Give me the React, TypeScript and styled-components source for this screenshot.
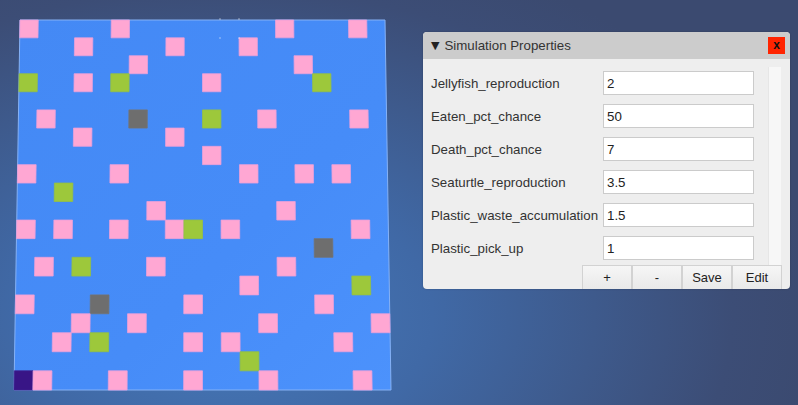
import React from "react";
import styled, { createGlobalStyle } from "styled-components";

const GlobalStyle = createGlobalStyle`
  html, body {
    margin: 0;
    padding: 0;
    width: 798px;
    height: 405px;
    overflow: hidden;
  }
  body {
    font-family: "Liberation Sans", Arial, sans-serif;
  }
`;

const Scene = styled.div`
  position: relative;
  width: 798px;
  height: 405px;
  overflow: hidden;
  background: radial-gradient(
    ellipse 75% 95% at 28% 78%,
    #4679b9 0%,
    #4069a6 35%,
    #3e5a8c 62%,
    #3c4d76 85%,
    #3b4a70 100%
  );
`;

const Canvas = styled.svg`
  display: block;
  width: 798px;
  height: 405px;
`;

const Panel = styled.div`
  position: absolute;
  left: 423px;
  top: 32px;
  width: 367px;
  height: 257px;
  background: #eeeeee;
  border-radius: 4px;
  overflow: hidden;
  display: flex;
  flex-direction: column;
  box-shadow: 0 0 2px rgba(0, 0, 0, 0.25);
`;

const Header = styled.div`
  height: 27px;
  flex: none;
  background: #cccccc;
  display: flex;
  align-items: center;
  padding: 0 5px 0 8px;
  font-size: 13.3px;
  color: #333;
`;

const Caret = styled.span`
  font-family: "DejaVu Sans", sans-serif;
  font-size: 11px;
  margin-right: 5px;
  color: #222;
`;

const Title = styled.span`
  flex: 1;
`;

const Close = styled.div`
  width: 17px;
  height: 17px;
  background: #ff2400;
  color: #111;
  font-size: 12px;
  font-weight: bold;
  display: flex;
  align-items: center;
  justify-content: center;
  line-height: 1;
  padding-bottom: 2px;
  box-sizing: border-box;
`;

const Body = styled.div`
  flex: 1;
  display: flex;
  min-height: 0;
`;

const List = styled.div`
  padding: 12px 0 0 8px;
  display: flex;
  flex-direction: column;
  gap: 9px;
`;

const Row = styled.div`
  display: grid;
  grid-template-columns: 172px 151px;
  align-items: center;
  height: 24px;
`;

const Label = styled.span`
  font-size: 13.3px;
  color: #333;
  white-space: nowrap;
`;

const Field = styled.input`
  box-sizing: border-box;
  width: 151px;
  height: 24px;
  margin: 0;
  border: 1px solid #cbcbcb;
  background: #fff;
  padding: 0 3px;
  font-family: "Liberation Sans", Arial, sans-serif;
  font-size: 13.3px;
  color: #222;
  outline: none;
`;

const Track = styled.div`
  width: 13px;
  margin: 8px 9px 0 auto;
  background: #f7f7f7;
  border-left: 1px solid #e6e6e6;
  box-sizing: border-box;
`;

const Footer = styled.div`
  flex: none;
  height: 24px;
  display: flex;
  justify-content: flex-end;
  padding-right: 8px;
`;

const Button = styled.button`
  box-sizing: border-box;
  width: 50px;
  height: 24px;
  margin: 0;
  padding: 0;
  border: 1px solid #d2d2d2;
  border-bottom: none;
  background: linear-gradient(#f6f6f6, #e9e9e9);
  font-family: "Liberation Sans", Arial, sans-serif;
  font-size: 13px;
  color: #222;
`;

type Kind = "p" | "g" | "k" | "d";

const cells: [number, number, Kind][] = [
  [0, 0, "p"], [0, 5, "p"], [0, 14, "p"], [0, 18, "p"],
  [1, 3, "p"], [1, 8, "p"], [1, 12, "p"],
  [2, 6, "p"], [2, 15, "p"],
  [3, 0, "g"], [3, 3, "p"], [3, 5, "g"], [3, 10, "p"], [3, 16, "g"],
  [5, 1, "p"], [5, 6, "k"], [5, 10, "g"], [5, 13, "p"], [5, 18, "p"],
  [6, 3, "p"], [6, 8, "p"],
  [7, 10, "p"],
  [8, 0, "p"], [8, 5, "p"], [8, 12, "p"], [8, 15, "p"], [8, 17, "p"],
  [9, 2, "g"],
  [10, 7, "p"], [10, 14, "p"],
  [11, 0, "p"], [11, 2, "p"], [11, 5, "p"], [11, 8, "p"], [11, 9, "g"], [11, 11, "p"], [11, 18, "p"],
  [12, 16, "k"],
  [13, 1, "p"], [13, 3, "g"], [13, 7, "p"], [13, 14, "p"],
  [14, 12, "p"], [14, 18, "g"],
  [15, 0, "p"], [15, 4, "k"], [15, 9, "p"], [15, 16, "p"],
  [16, 3, "p"], [16, 6, "p"], [16, 13, "p"], [16, 19, "p"],
  [17, 2, "p"], [17, 4, "g"], [17, 9, "p"], [17, 11, "p"], [17, 17, "p"],
  [18, 12, "g"],
  [19, 0, "d"], [19, 1, "p"], [19, 5, "p"], [19, 9, "p"], [19, 13, "p"], [19, 18, "p"],
];

const fills: Record<Kind, string> = {
  p: "#ffa7d3",
  g: "#9dc83b",
  k: "#6e6e6e",
  d: "#381586",
};
const strokes: Record<Kind, string> = {
  p: "#e9a0da",
  g: "#93c046",
  k: "#747474",
  d: "#40208e",
};

const rowY = (r: number) => 20 + r * 17.8 + r * r * 0.035;
const colX = (c: number, y: number) => {
  const t = (y - 20) / 370;
  const left = 20 - 6 * t;
  const right = 385 + 6 * t;
  return left + ((right - left) * c) / 20;
};

const quad = (r: number, c: number) => {
  const y0 = rowY(r);
  const y1 = rowY(r + 1);
  const pts = [
    [colX(c, y0), y0],
    [colX(c + 1, y0), y0],
    [colX(c + 1, y1), y1],
    [colX(c, y1), y1],
  ];
  return pts.map((p) => `${p[0].toFixed(2)},${p[1].toFixed(2)}`).join(" ");
};

const props: [string, string][] = [
  ["Jellyfish_reproduction", "2"],
  ["Eaten_pct_chance", "50"],
  ["Death_pct_chance", "7"],
  ["Seaturtle_reproduction", "3.5"],
  ["Plastic_waste_accumulation", "1.5"],
  ["Plastic_pick_up", "1"],
];

export default function App() {
  return (
    <>
      <GlobalStyle />
      <Scene>
        <Canvas viewBox="0 0 798 405">
          <defs>
            <linearGradient id="plane" x1="0" y1="0" x2="1" y2="1">
              <stop offset="0" stopColor="#4489f5" />
              <stop offset="0.6" stopColor="#468cf8" />
              <stop offset="1" stopColor="#4c92fc" />
            </linearGradient>
          </defs>
          <polygon
            points="20,20 385,20 391,390 14,390"
            fill="url(#plane)"
            stroke="#86b2f6"
            strokeWidth="1"
          />
          {cells.map(([r, c, k], i) => (
            <polygon
              key={i}
              points={quad(r, c)}
              fill={fills[k]}
              stroke={strokes[k]}
              strokeWidth="0.8"
            />
          ))}
          <rect x="219.5" y="18.5" width="1" height="1" fill="#ffffff" />
          <rect x="238.5" y="18.5" width="1" height="1" fill="#ffffff" />
          <rect x="219.5" y="37.5" width="1" height="1" fill="#ffffff" />
          <rect x="238.5" y="37.5" width="1" height="1" fill="#ffffff" />
        </Canvas>
        <Panel>
          <Header>
            <Caret>▼</Caret>
            <Title>Simulation Properties</Title>
            <Close>x</Close>
          </Header>
          <Body>
            <List>
              {props.map(([name, value]) => (
                <Row key={name}>
                  <Label>{name}</Label>
                  <Field defaultValue={value} />
                </Row>
              ))}
            </List>
            <Track />
          </Body>
          <Footer>
            <Button>+</Button>
            <Button>-</Button>
            <Button>Save</Button>
            <Button>Edit</Button>
          </Footer>
        </Panel>
      </Scene>
    </>
  );
}
